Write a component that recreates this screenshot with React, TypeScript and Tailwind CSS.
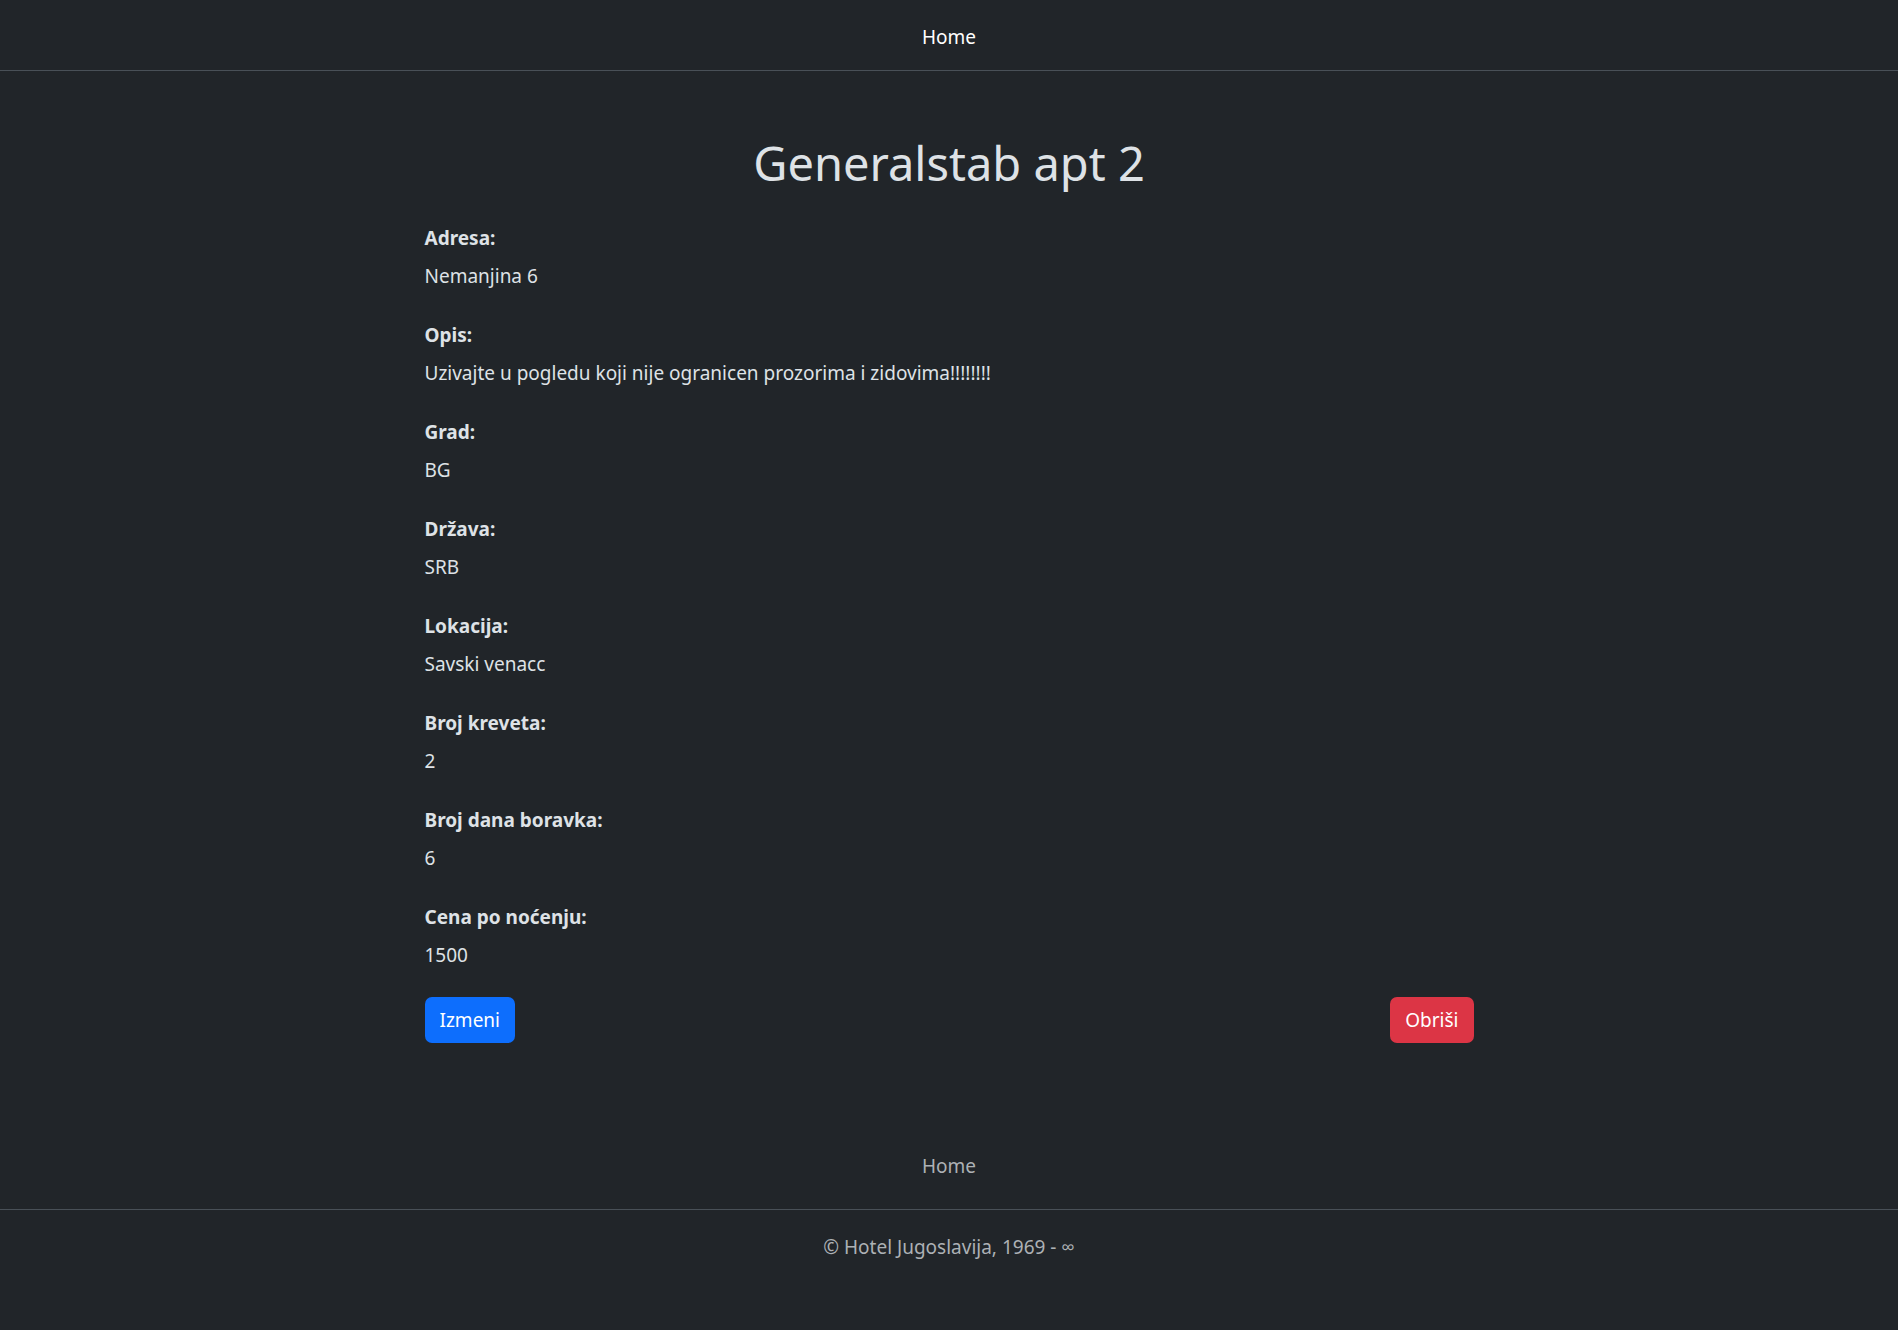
import React from "react";

const details: { label: string; value: string }[] = [
  { label: "Adresa:", value: "Nemanjina 6" },
  { label: "Opis:", value: "Uzivajte u pogledu koji nije ogranicen prozorima i zidovima!!!!!!!!" },
  { label: "Grad:", value: "BG" },
  { label: "Država:", value: "SRB" },
  { label: "Lokacija:", value: "Savski venacc" },
  { label: "Broj kreveta:", value: "2" },
  { label: "Broj dana boravka:", value: "6" },
  { label: "Cena po noćenju:", value: "1500" },
];

export default function App() {
  return (
    <div
      className="min-h-[1330px] bg-[#212529] text-[#dee2e6] text-[19px] leading-[30px]"
      style={{ fontFamily: '"Noto Sans", "Open Sans", sans-serif' }}
    >
      {/* Header */}
      <header className="h-[71px] pt-[3px] border-b border-[#495057] flex items-center justify-center">
        <a href="#" className="text-white">
          Home
        </a>
      </header>

      <main className="w-[1049px] mx-auto">
        <h1 className="pt-[64px] text-center text-[47px] leading-[56px] text-[#dee2e6] mb-[32px]">
          Generalstab apt 2
        </h1>

        <div className="flex flex-col gap-[29px] mb-[27px]">
          {details.map((d) => (
            <div key={d.label}>
              <div className="font-bold mb-[8px]">{d.label}</div>
              <div>{d.value}</div>
            </div>
          ))}
        </div>

        <div className="flex justify-between">
          <button className="h-[46px] px-[15px] rounded-[7px] bg-[#0d6efd] text-white">
            Izmeni
          </button>
          <button className="h-[46px] px-[15px] rounded-[7px] bg-[#dc3545] text-white">
            Obriši
          </button>
        </div>
      </main>

      {/* Footer */}
      <footer className="mt-[98px]">
        <div className="border-b border-[#495057] pt-[10px] pb-[28px] flex justify-center">
          <a href="#" className="text-[#adb1b5]">
            Home
          </a>
        </div>
        <p className="text-center text-[#adb1b5] pt-[22px]">© Hotel Jugoslavija, 1969 - ∞</p>
      </footer>
    </div>
  );
}
